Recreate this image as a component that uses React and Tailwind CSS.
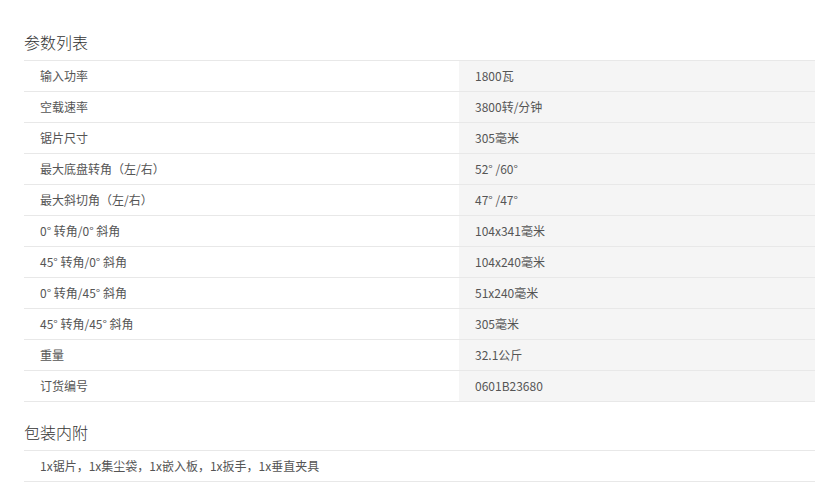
import React from 'react';

// 参数列表数据
const specs = [
  ['输入功率', '1800瓦'],
  ['空载速率', '3800转/分钟'],
  ['锯片尺寸', '305毫米'],
  ['最大底盘转角（左/右）', '52° /60°'],
  ['最大斜切角（左/右）', '47° /47°'],
  ['0° 转角/0° 斜角', '104x341毫米'],
  ['45° 转角/0° 斜角', '104x240毫米'],
  ['0° 转角/45° 斜角', '51x240毫米'],
  ['45° 转角/45° 斜角', '305毫米'],
  ['重量', '32.1公斤'],
  ['订货编号', '0601B23680'],
];

const font = { fontFamily: '"Noto Sans CJK SC", "Liberation Sans", sans-serif' };

const App = () => {
  return (
    <div className="min-h-screen bg-white pl-[24px] pr-[21px] pt-[30px]" style={font}>
      {/* 参数列表 */}
      <h2 className="h-[24px] text-[16px] leading-[24px] font-light text-[#333] mb-[6px]">参数列表</h2>
      <div className="border-t border-[#e8e8e8]">
        {specs.map(([label, value]) => (
          <div key={label} className="flex h-[31px] border-b border-[#e8e8e8] text-[12px] text-[#555]">
            <div className="w-[435px] pl-[16px] flex items-center">{label}</div>
            <div className="flex-1 bg-[#f5f5f5] pl-[16px] flex items-center">{value}</div>
          </div>
        ))}
      </div>

      {/* 包装内附 */}
      <h2 className="h-[24px] text-[16px] leading-[24px] font-light text-[#333] mt-[18px] mb-[6px]">包装内附</h2>
      <div className="border-t border-b border-[#e8e8e8] h-[32px] pl-[16px] flex items-center text-[12px] text-[#555]">
        1x锯片，1x集尘袋，1x嵌入板，1x扳手，1x垂直夹具
      </div>
    </div>
  );
};

export default App;
